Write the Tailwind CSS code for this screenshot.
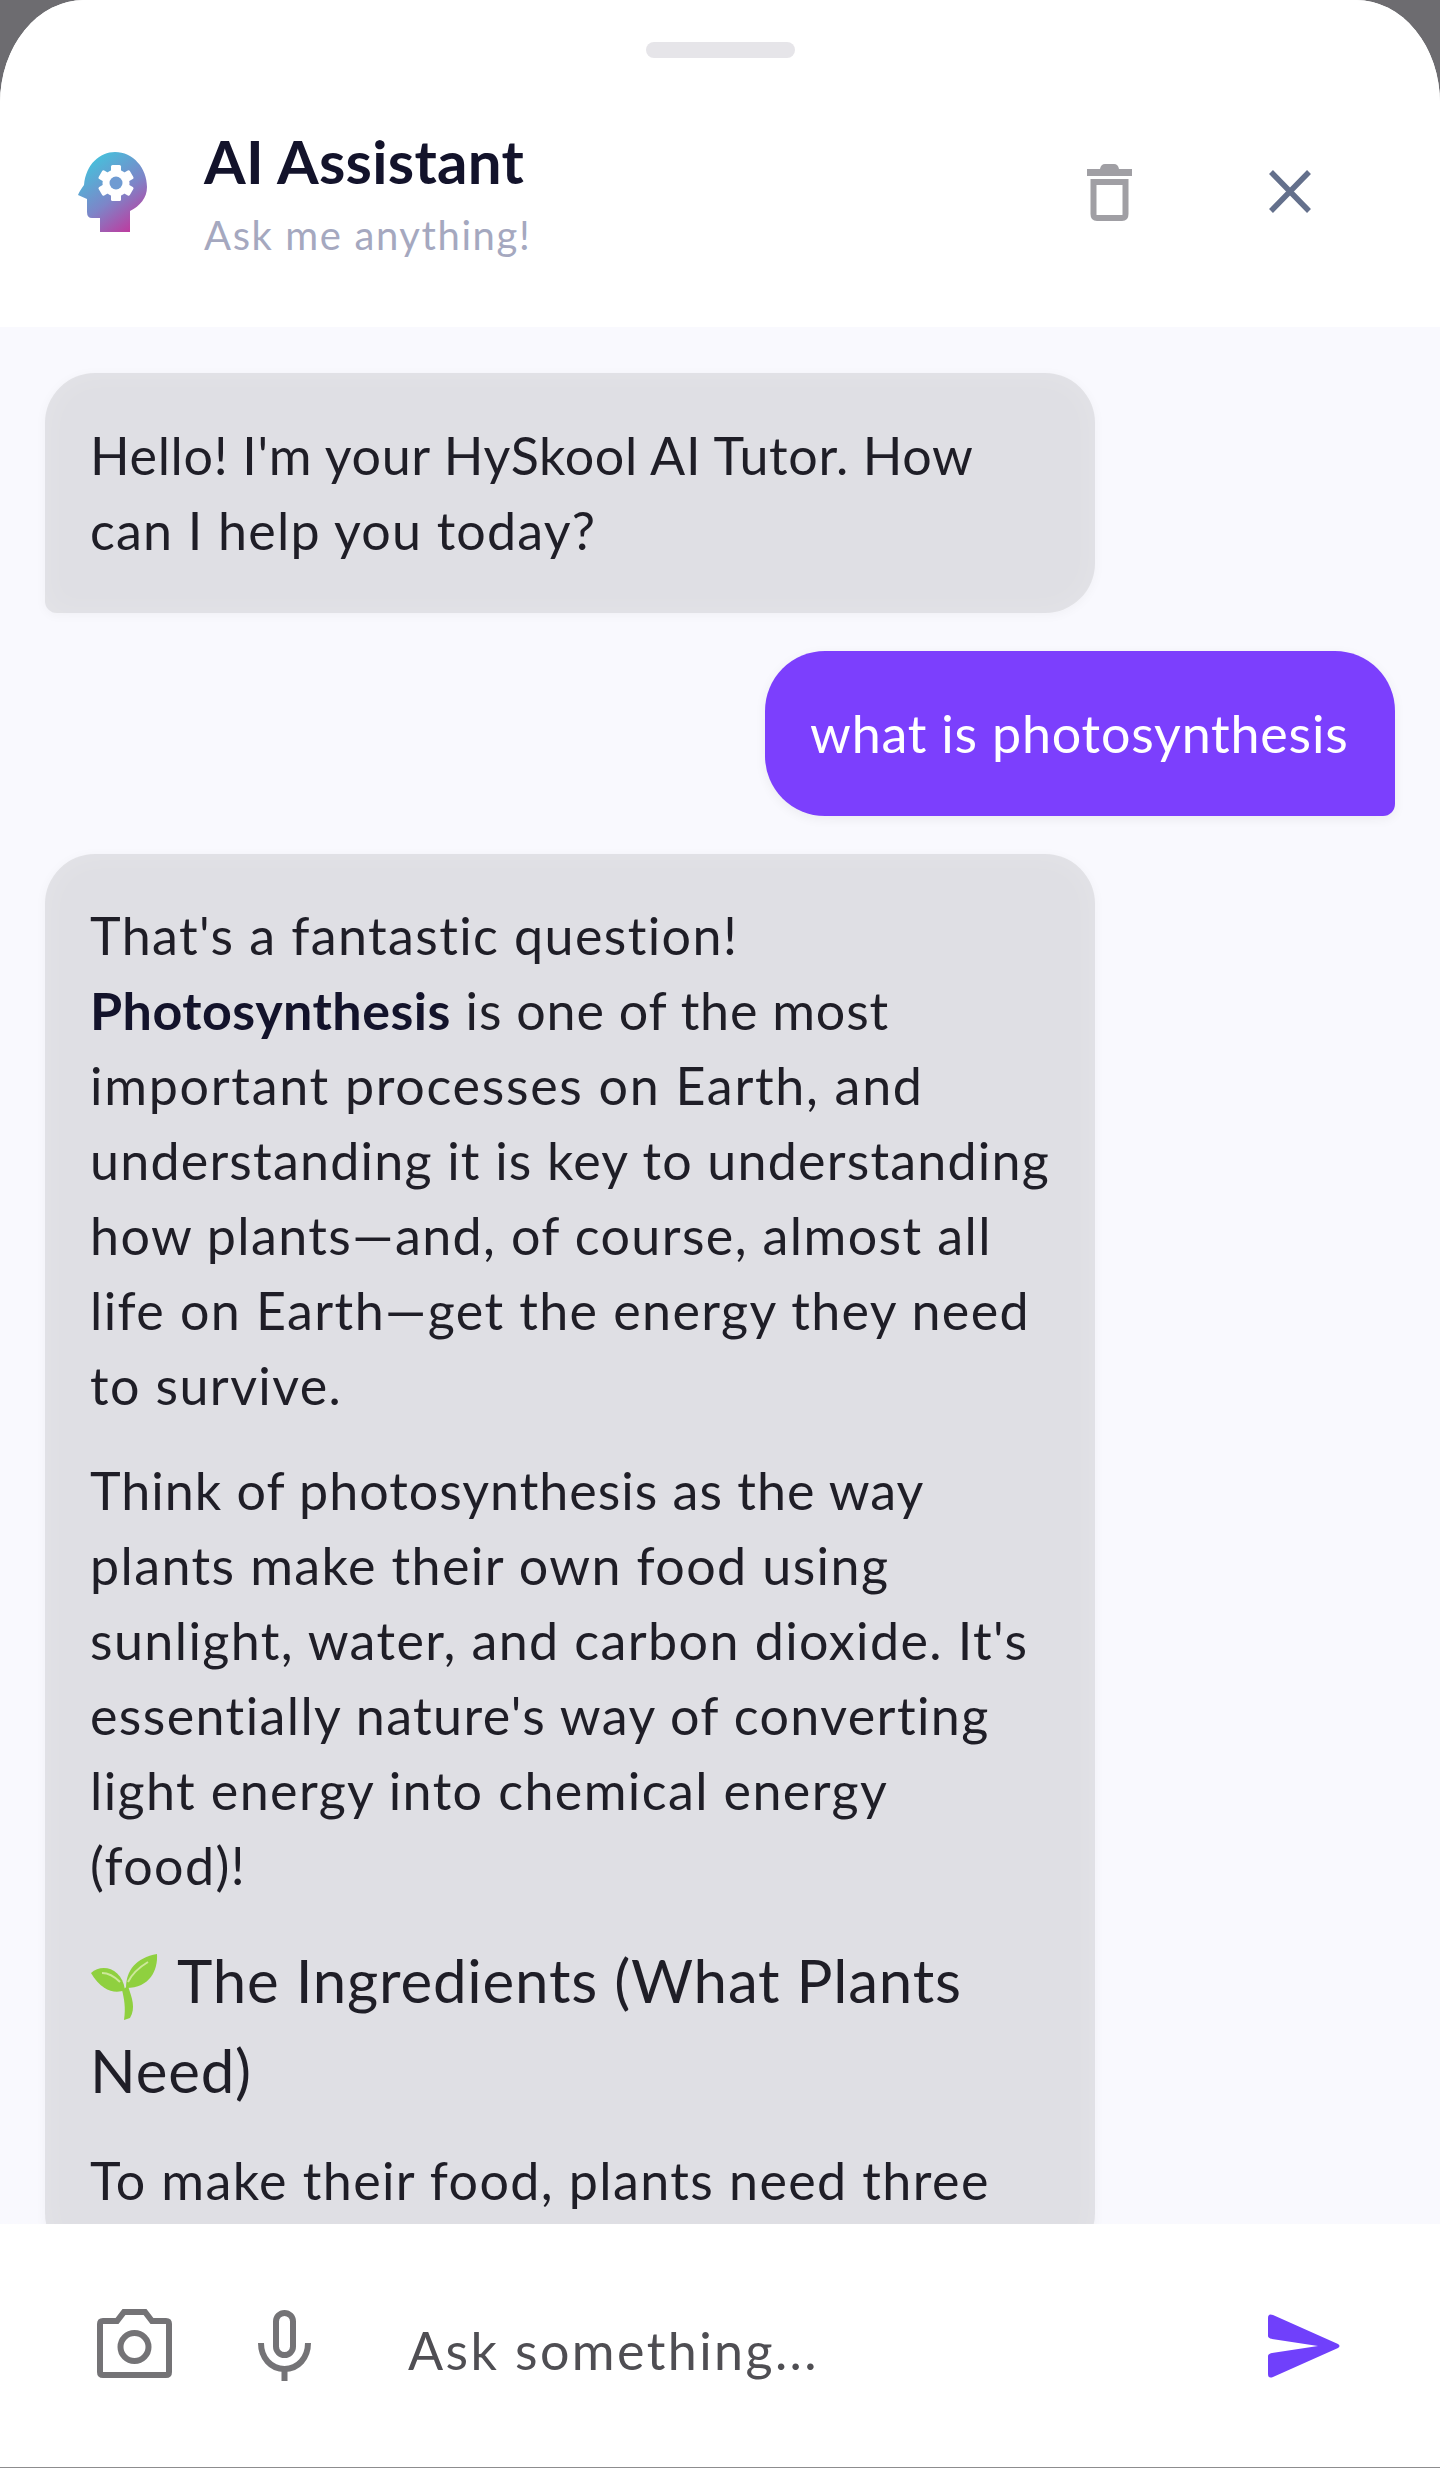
<!DOCTYPE html>
<html lang="en">
<head>
    <meta charset="UTF-8">
    <meta name="viewport" content="width=device-width, initial-scale=1.0">
    <title>AI Assistant</title>
    <script src="https://cdn.jsdelivr.net/npm/@tailwindcss/browser@4"></script>
</head>
<body class="bg-[#6d6c70] font-['Lato','Liberation_Sans',sans-serif]">
    <div class="h-[2468px] w-[1440px] flex flex-col overflow-hidden rounded-t-[84px_103px] bg-white">
        <!-- Header -->
        <header class="h-[327px] shrink-0 bg-white pt-[42px]">
            <div class="mx-auto h-[16px] w-[149px] rounded-full bg-[#e6e5e9]"></div>
            <div class="mt-[70px] flex items-start pl-[78px] pr-[129px]">
                <svg class="mt-[24px] h-[80px] w-[69px] shrink-0" viewBox="0 0 69 80">
                    <defs>
                        <linearGradient id="head" gradientUnits="userSpaceOnUse" x1="8" y1="4" x2="62" y2="78">
                            <stop offset="0" stop-color="#3fc8de"/>
                            <stop offset="0.55" stop-color="#7d85c8"/>
                            <stop offset="1" stop-color="#c6329a"/>
                        </linearGradient>
                    </defs>
                    <path fill="url(#head)" d="M22 80V66H14Q9 66 9 60V47L0 43Q1 40 6 33C8 12 22 0 37 0C55 0 69 16 69 35C69 46 62 54 52 59V80Z"/>
                    <g fill="#fff">
                        <circle cx="38" cy="31" r="13.5"/>
                        <rect x="33" y="13" width="10" height="36" rx="1.5"/>
                        <rect x="33" y="13" width="10" height="36" rx="1.5" transform="rotate(60 38 31)"/>
                        <rect x="33" y="13" width="10" height="36" rx="1.5" transform="rotate(120 38 31)"/>
                    </g>
                    <circle cx="38" cy="31" r="6.5" fill="#6f9bd2"/>
                </svg>
                <div class="ml-[57px] -mt-[2px]">
                    <h1 class="text-[60px] leading-[70px] font-bold tracking-[0.3px] text-[#13132b]">AI Assistant</h1>
                    <p class="mt-[14px] text-[40px] leading-[50px] tracking-[1.6px] text-[#a5a8bf]">Ask me anything!</p>
                </div>
                <svg class="ml-auto mt-[36px] h-[57px] w-[45px]" viewBox="0 0 45 57" fill="#a09fa4">
                    <path d="M13 5Q14 0 18 0H27Q31 0 32 5H45V12H0V5Z"/>
                    <path fill="none" stroke="#a09fa4" stroke-width="6" d="M6.5 18V50Q6.5 54 10 54H35Q38.500 54 38.500 50V18Z"/>
                </svg>
                <svg class="ml-[137px] mt-[42px] h-[43px] w-[42px]" viewBox="0 0 42 43" fill="none" stroke="#64708c" stroke-width="5.500">
                    <path d="M2 2L40 41M40 2L2 41"/>
                </svg>
            </div>
        </header>

        <!-- Messages -->
        <main class="flex min-h-0 flex-1 flex-col gap-[38px] overflow-hidden bg-[#f9f9fe] px-[45px] pt-[46px] text-[52px] leading-[75px] text-[#1f1e27]">
            <div class="w-[1050px] shrink-0 whitespace-nowrap rounded-[50px] rounded-bl-[12px] bg-[#dfdfe4] p-[45px] tracking-[0.65px] shadow-[0_2px_12px_rgba(0,0,0,0.04),inset_0_0_30px_rgba(255,255,255,0.18)]">
                Hello! I'm your HySkool AI Tutor. How<br><span class="tracking-[1.2px]">can I help you today?</span>
            </div>

            <div class="w-[630px] shrink-0 self-end whitespace-nowrap rounded-[60px] rounded-br-[12px] bg-[#7c3ffd] p-[45px] tracking-[0.8px] text-white shadow-[0_3px_12px_rgba(0,0,0,0.06)]">
                what is photosynthesis
            </div>

            <div class="w-[1050px] shrink-0 whitespace-nowrap rounded-[50px] bg-[#dfdfe4] px-[45px] pt-[44px] pb-[45px] tracking-[1.4px] shadow-[0_2px_12px_rgba(0,0,0,0.04),inset_0_0_30px_rgba(255,255,255,0.18)]">
                <p>That's a fantastic question!<br><b class="tracking-[0.5px] text-[#13132b]">Photosynthesis</b> <span class="tracking-[0.8px]">is one of the most</span><br><span class="tracking-[1.7px]">important processes on Earth, and</span><br><span class="tracking-[1.2px]">understanding it is key to understanding</span><br>how plants—and, of course, almost all<br>life on Earth—get the energy they need<br>to survive.</p>
                <p class="mt-[30px]"><span class="tracking-[1px]">Think of photosynthesis as the way</span><br>plants make their own food using<br>sunlight, water, and carbon dioxide. It's<br>essentially nature's way of converting<br>light energy into chemical energy<br>(food)!</p>
                <h2 class="mt-[32px] text-[60px] leading-[90px] tracking-[0.8px]">
                    <svg class="mb-[2px] mr-[19px] inline-block h-[66px] w-[68px]" viewBox="0 0 68 66">
                        <path fill="#8fd03f" d="M34 66C36 54 34 44 32 36L38 32C42 44 46 54 40 64Z"/>
                        <path fill="#8fd03f" d="M36 34C36 16 46 4 67 0C68 16 60 34 36 34Z"/>
                        <path fill="#8fd03f" d="M35 36C26 40 12 38 1 19C12 9 32 14 35 36Z"/>
                        <path fill="none" stroke="#cde89a" stroke-width="2" d="M38 28C42 20 48 14 58 8M30 28C24 22 18 19 12 19"/>
                    </svg>The Ingredients (What Plants<br>Need)
                </h2>
                <p class="mt-[28px]">To make their food, plants need three</p>
            </div>
        </main>

        <!-- Input bar -->
        <footer class="flex h-[244px] shrink-0 items-center border-b border-[#8d8d8f] bg-white pl-[97px] pr-[100px]">
            <svg class="mb-[4px] h-[69px] w-[75px]" viewBox="0 0 75 69" fill="none" stroke="#747376" stroke-width="6">
                <path d="M6 12H20L27 3H48L55 12H69Q72 12 72 15V63Q72 66 69 66H6Q3 66 3 63V15Q3 12 6 12Z"/>
                <circle cx="37.500" cy="38" r="14"/>
            </svg>
            <svg class="ml-[86px] h-[71px] w-[53px]" viewBox="0 0 53 71" fill="none" stroke="#747376" stroke-width="6">
                <rect x="18" y="3" width="17" height="42" rx="8.500"/>
                <path d="M3 33C3 48 13 59 26.500 59C40 59 50 48 50 33M26.500 59V71"/>
            </svg>
            <div class="ml-[97px] mt-[8px] text-[52px] tracking-[2.4px] text-[#4f4e53]">Ask something...</div>
            <svg class="ml-auto h-[64px] w-[72px]" viewBox="0 0 72 64" fill="#7040fb">
                <path d="M0 4Q0-1 5 1L70 30Q73 32 70 34L5 63Q0 65 0 60V42Q0 40 4 39L50 32L4 25Q0 24 0 22Z"/>
            </svg>
        </footer>
    </div>
</body>
</html>
